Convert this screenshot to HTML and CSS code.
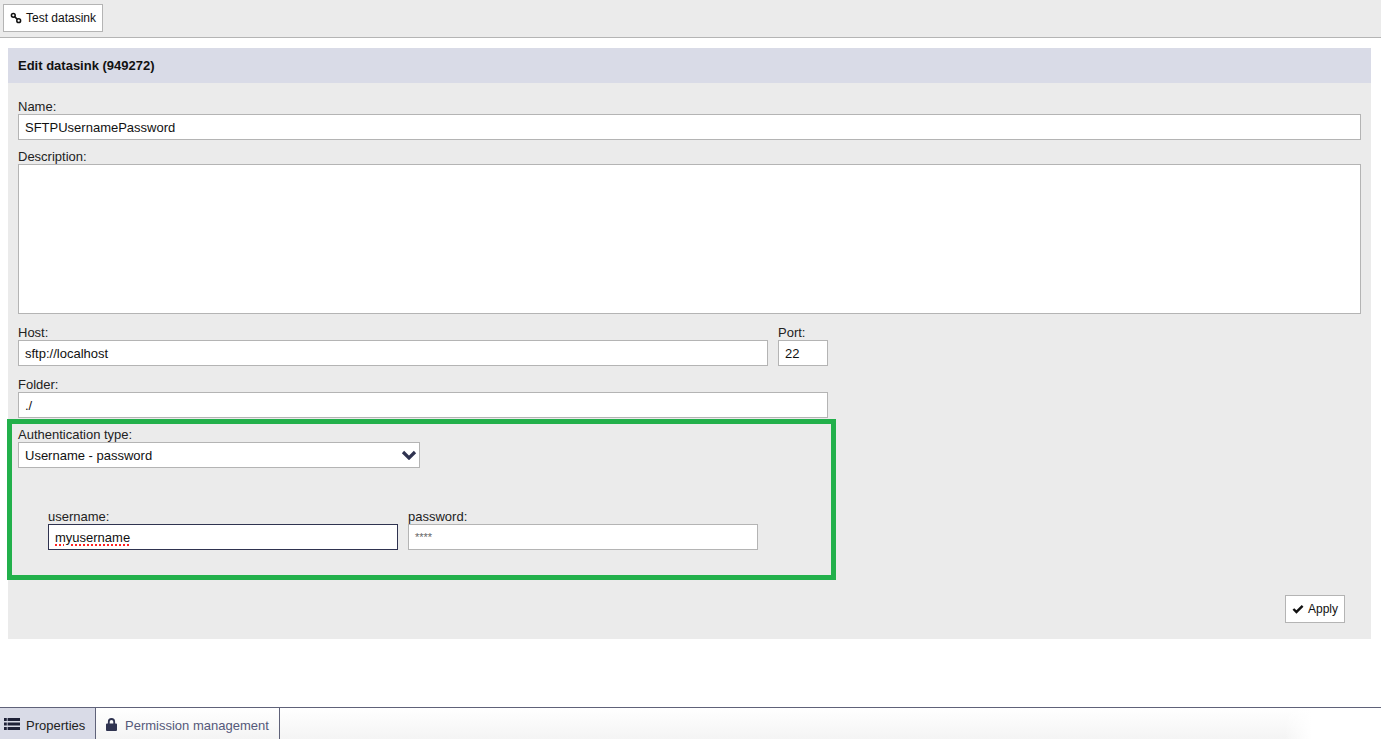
FILE: index.html
```html
<!DOCTYPE html>
<html lang="en">
<head>
<meta charset="utf-8">
<title>Edit datasink</title>
<link rel="stylesheet" href="styles.css">
</head>
<body>
<div class="page">
  <div class="toolbar">
    <button class="btn" type="button">
      <svg class="ico" viewBox="0 0 12 12" width="12" height="12"><circle cx="3.300" cy="3.300" r="1.900"/><circle cx="8.700" cy="8.700" r="1.900"/><path d="M4.600 4.600l2.800 2.800"/></svg>
      Test datasink
    </button>
  </div>
  <main class="panel">
    <h1 class="panel-head">Edit datasink (949272)</h1>
    <div class="panel-body">
      <div class="field">
        <label class="lbl">Name:</label>
        <div class="ctl w-full">SFTPUsernamePassword</div>
      </div>
      <div class="field gap-8">
        <label class="lbl">Description:</label>
        <div class="ctl w-full area"></div>
      </div>
      <div class="row gap-10">
        <div class="field">
          <label class="lbl">Host:</label>
          <div class="ctl w-host">sftp://localhost</div>
        </div>
        <div class="field">
          <label class="lbl">Port:</label>
          <div class="ctl w-port">22</div>
        </div>
      </div>
      <div class="field gap-10">
        <label class="lbl">Folder:</label>
        <div class="ctl w-folder">./</div>
      </div>
      <div class="field gap-8">
        <label class="lbl">Authentication type:</label>
        <div class="ctl w-select select">
          <span class="select-text">Username - password</span>
          <svg class="chev" viewBox="0 0 16 10" width="16" height="10"><path d="M2 2l6 6 6-6"/></svg>
        </div>
      </div>
      <div class="row creds">
        <div class="field">
          <label class="lbl">username:</label>
          <div class="ctl w-cred focus"><span class="spell">myusername</span></div>
        </div>
        <div class="field">
          <label class="lbl">password:</label>
          <div class="ctl w-cred secret">****</div>
        </div>
      </div>
      <div class="actions">
        <button class="btn" type="button">
          <svg class="check" viewBox="0 0 13 10" width="12" height="10"><path d="M1.500 5l3.300 3.200L11.500 1.600"/></svg>
          Apply
        </button>
      </div>
    </div>
  </main>
  <div class="tabs">
    <div class="tab active">
      <svg class="list" viewBox="0 0 16 12" width="16" height="12"><path d="M0 0h2.800v3H0zM0 4.500h2.800v3H0zM0 9h2.800v3H0zM3.600 0H16v3H3.600zM3.600 4.500H16v3H3.600zM3.600 9H16v3H3.600z"/></svg>
      Properties
    </div>
    <div class="tab">
      <svg class="lock" viewBox="0 0 11 13" width="11" height="13"><path d="M1 5.400h.9V3.700a3.600 3.600 0 0 1 7.200 0v1.700h.9a1 1 0 0 1 1 1V12a1 1 0 0 1-1 1H1a1 1 0 0 1-1-1V6.400a1 1 0 0 1 1-1zM3.700 5.400h3.600V3.700a1.800 1.800 0 0 0-3.600 0z"/></svg>
      Permission management
    </div>
  </div>
  <div class="highlight"></div>
</div>
</body>
</html>
```
FILE: styles.css
```css
* { box-sizing: border-box; }
html, body { margin: 0; height: 100%; }
body { font-family: "Liberation Sans", Arial, sans-serif; font-size: 13px; color: #111; background: #fff; overflow: hidden; }
.page { position: relative; height: 739px; display: flex; flex-direction: column; }
.toolbar { height: 38px; background: #ebebeb; border-bottom: 1px solid #b4b4b4; padding: 4px 3px; flex: none; }
.btn { height: 28px; display: inline-flex; align-items: center; gap: 4px; padding: 0 6px; background: #fff; border: 1px solid #b4b4b4; font: 12px "Liberation Sans", Arial, sans-serif; color: #111; border-radius: 0; }
.ico { fill: none; stroke: #111; stroke-width: 1.500; }
.panel { margin: 10px 10px 0 8px; background: #ebebeb; height: 591px; flex: none; }
.panel-head { margin: 0; height: 35px; background: #d9dbe7; padding: 0 10px; font-size: 13px; font-weight: bold; line-height: 35px; }
.panel-body { padding: 15px 10px 0; }
.lbl { display: block; height: 16px; line-height: 18px; font-size: 13px; color: #222; }
.ctl { height: 26px; background: #fff; border: 1px solid #b4b4b4; padding: 0 6px; line-height: 26px; font-size: 13px; color: #111; }
.w-full { width: 1343px; }
.area { height: 150px; }
.w-host { width: 750px; }
.w-port { width: 50px; }
.w-folder { width: 810px; }
.w-select { width: 402px; }
.w-cred { width: 350px; }
.gap-8 { margin-top: 8px; }
.gap-10 { margin-top: 10px; }
.row { display: flex; gap: 10px; }
.select { display: flex; align-items: center; justify-content: space-between; padding-right: 2px; }
.select-text { padding-top: 2px; }
.chev { fill: none; stroke: #2f3350; stroke-width: 3.200; }
.creds { margin-top: 40px; padding-left: 30px; }
.focus { border-color: #2f3350; }
.spell { text-decoration: underline dotted #f22; text-decoration-thickness: 1.500px; text-underline-offset: 2px; }
.secret { color: #666; font-size: 11px; line-height: 24px; }
.actions { display: flex; justify-content: flex-end; margin-top: 45px; padding-right: 16px; }
.check { fill: none; stroke: #111; stroke-width: 2.600; }
.tabs { position: absolute; left: 0; right: 0; bottom: 0; height: 32px; display: flex; border-top: 1px solid #5f6279; background: linear-gradient(to right, rgba(255,255,255,0) 93%, #fff 95%), linear-gradient(to bottom, #fff, #f4f4f4); }
.tab { display: flex; align-items: center; gap: 8px; padding: 3px 10px 0; border-right: 1px solid #5f6279; color: #55597a; font-size: 13px; }
.tab.active { width: 96px; background: #d9dbe7; color: #222; padding: 3px 4px 0; gap: 6px; }
.tab:not(.active) { width: 184px; }
.list { fill: #1f2238; margin-top: -2px; }
.lock { fill: #2f3350; margin-top: -2px; }
.highlight { position: absolute; left: 7px; top: 419px; width: 829px; height: 161px; border: 5px solid #22b04b; }
```
